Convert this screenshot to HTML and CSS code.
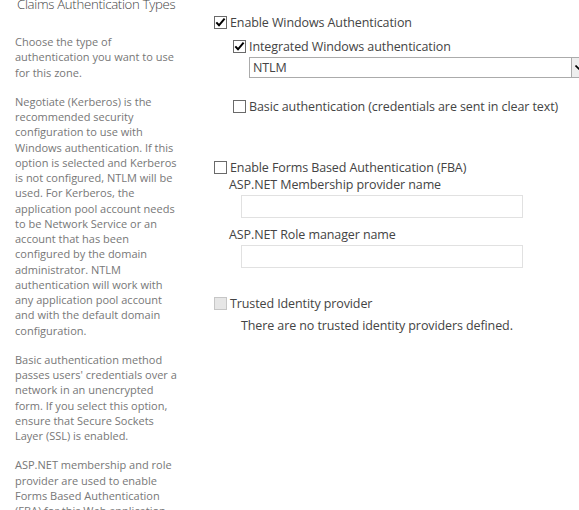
FILE: index.html
```html
<!DOCTYPE html>
<html>
<head>
<meta charset="utf-8">
<link rel="stylesheet" href="styles.css">
</head>
<body>
<div class="page">
  <div class="desc">
    <h3 class="title">Claims Authentication Types</h3>
    <p>Choose the type of authentication you want to use for this zone.</p>
    <p>Negotiate (Kerberos) is the recommended security configuration to use with Windows authentication. If this option is selected and Kerberos is not configured, NTLM will be used. For Kerberos, the application pool account needs to be Network Service or an account that has been configured by the domain administrator. NTLM authentication will work with any application pool account and with the default domain configuration.</p>
    <p>Basic authentication method passes users' credentials over a network in an unencrypted form. If you select this option, ensure that Secure Sockets Layer (SSL) is enabled.</p>
    <p>ASP.NET membership and role provider are used to enable Forms Based Authentication (FBA) for this Web application.</p>
  </div>
  <div class="form">
    <label class="check row-win">
      <span class="box"><svg viewBox="0 0 13 13" width="13" height="13"><path d="M2.3 6.4 L5 9.3 L10.6 2.6" fill="none" stroke="#000" stroke-width="2"/></svg></span>
      <span>Enable Windows Authentication</span>
    </label>
    <div class="sub">
      <label class="check row-iwa">
        <span class="box"><svg viewBox="0 0 13 13" width="13" height="13"><path d="M2.3 6.4 L5 9.3 L10.6 2.6" fill="none" stroke="#000" stroke-width="2"/></svg></span>
        <span>Integrated Windows authentication</span>
      </label>
      <div class="select">
        <span class="select-value">NTLM</span>
        <span class="select-btn"><svg viewBox="0 0 8 5" width="8" height="5"><path d="M0.5 0.5 L4 4 L7.5 0.5" fill="none" stroke="#000" stroke-width="1.6"/></svg></span>
      </div>
      <label class="check row-basic">
        <span class="box"></span>
        <span>Basic authentication (credentials are sent in clear text)</span>
      </label>
    </div>
    <label class="check row-fba">
      <span class="box"></span>
      <span>Enable Forms Based Authentication (FBA)</span>
    </label>
    <div class="fba">
      <div class="field-label first">ASP.NET Membership provider name</div>
      <div class="text-input"></div>
      <div class="field-label">ASP.NET Role manager name</div>
      <div class="text-input"></div>
    </div>
    <label class="check row-trusted">
      <span class="box disabled"></span>
      <span>Trusted Identity provider</span>
    </label>
    <div class="note">There are no trusted identity providers defined.</div>
  </div>
</div>
</body>
</html>
```
FILE: styles.css
```css
html, body {
  margin: 0;
  padding: 0;
  overflow: hidden;
  background: #fff;
}
body {
  width: 579px;
  height: 510px;
  font-family: "Segoe UI", "Open Sans", "Noto Sans", sans-serif;
}
.page {
  display: grid;
  grid-template-columns: 214px 1fr;
  margin-top: -6px;
}
.desc {
  padding-left: 15px;
  width: 166px;
  color: #777;
  font-size: 11px;
  line-height: 15.25px;
}
.title {
  margin: 0 0 20px 2px;
  font-size: 13.2px;
  line-height: 20px;
  font-weight: 300;
  letter-spacing: -0.3px;
  color: #444;
  white-space: nowrap;
}
.desc p {
  margin: 0 0 14px 0;
}
.form {
  color: #444;
  font-size: 12.5px;
  letter-spacing: -0.1px;
  line-height: 17px;
  padding-top: 19.5px;
}
.check {
  display: flex;
  align-items: center;
  gap: 3px;
  white-space: nowrap;
}
.box {
  width: 13px;
  height: 13px;
  box-sizing: border-box;
  border: 1px solid #6a6a6a;
  background: #fff;
  display: flex;
  align-items: center;
  justify-content: center;
  flex: none;
}
.box svg {
  display: block;
  flex: none;
}
.box.disabled {
  background: #e6e6e6;
  border-color: #c6c6c6;
}
.sub {
  padding-left: 19px;
}
.row-iwa {
  margin-top: 7px;
}
.select {
  margin: 2px 0 0 16px;
  height: 21px;
  width: 341px;
  box-sizing: border-box;
  border: 1px solid #ababab;
  display: flex;
  align-items: center;
  justify-content: space-between;
  flex: none;
}
.select-value {
  padding-left: 3px;
  color: #444;
}
.select-btn {
  width: 18px;
  height: 100%;
  box-sizing: border-box;
  border-left: 1px solid #ababab;
  background: #eee;
  display: flex;
  align-items: center;
  justify-content: flex-start;
  padding-left: 3px;
}
.row-basic {
  margin-top: 20px;
}
.row-fba {
  margin-top: 44px;
}
.fba {
  padding-left: 15px;
}
.field-label {
  margin-top: 8.5px;
}
.field-label.first {
  margin-top: 0;
}
.text-input {
  margin: 2px 0 0 12px;
  width: 282px;
  height: 23px;
  box-sizing: border-box;
  border: 1px solid #e1e1e1;
  background: #fff;
}
.row-trusted {
  margin-top: 27px;
}
.note {
  margin: 5px 0 0 27px;
}
```
